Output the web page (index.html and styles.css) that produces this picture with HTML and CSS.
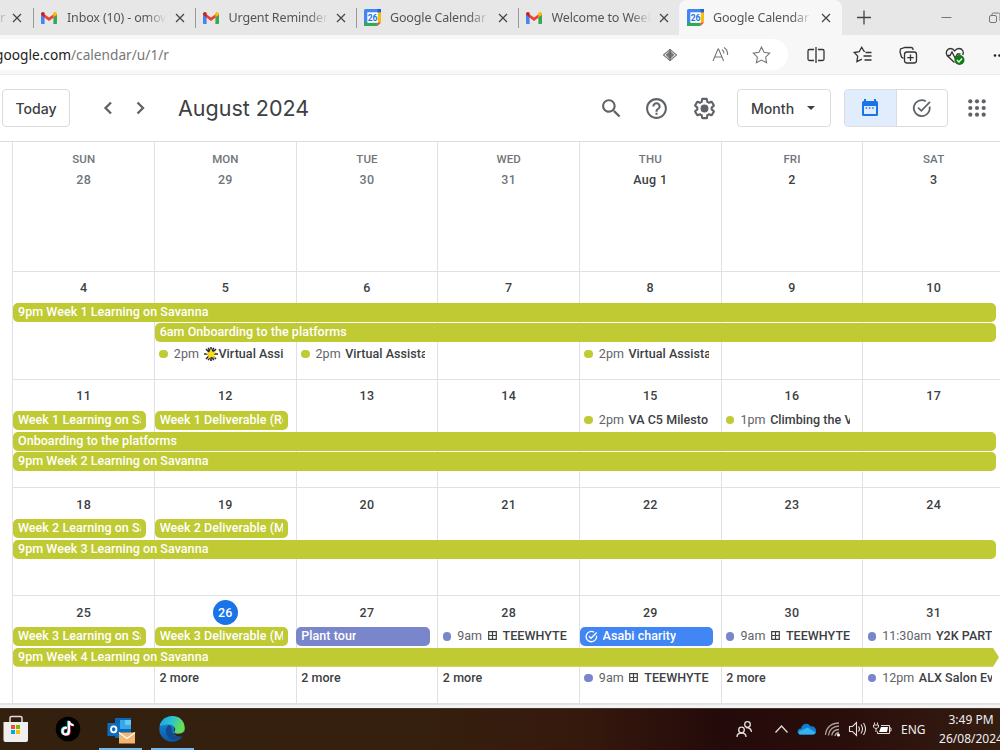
FILE: index.html
```html
<!DOCTYPE html>
<html lang="en">
<head>
<meta charset="utf-8">
<title>Google Calendar - August 2024</title>
<link rel="stylesheet" href="styles.css">
</head>
<body>
<svg class="defs" width="0" height="0">
  <symbol id="gmail" viewBox="0 0 16 12"><path fill="#4285f4" d="M0 2v9c0 .6.4 1 1 1h2.6V5z"/><path fill="#34a853" d="M16 2v9c0 .6-.4 1-1 1h-2.600V5z"/><path fill="#ea4335" d="M1 .4 8 5.600 15 .4l-1 4-6 4.700-6-4.700z"/><path fill="#c5221f" d="M0 2C0 .2 2-.6 3.600.7v4.500L0 2.800z"/><path fill="#fbbc04" d="M16 2c0-1.800-2-2.600-3.600-1.300v4.500L16 2.800z"/></symbol>
  <symbol id="gcal" viewBox="0 0 17 17"><path fill="#4285f4" d="M1.500 0H17v4H4v13H0V1.500Q0 0 1.500 0z"/><path fill="#1967d2" d="M13.500 0H17v3.500h-3.500z"/><path fill="#fbbc04" d="M13.500 3.500H17v10h-3.500z"/><path fill="#34a853" d="M0 13.500h13.500V17H1.500Q0 17 0 15.500z"/><path fill="#ea4335" d="M13.500 13.500H17L13.500 17z"/><path fill="#fff" d="M3.300 3.300h10.400v10.400H3.300z"/><text x="8.500" y="11.500" text-anchor="middle" font-size="8.500" font-weight="700" font-family="Roboto, sans-serif" fill="#1a73e8">26</text></symbol>
  <symbol id="close" viewBox="0 0 10 10"><path d="M1 1l8 8M9 1L1 9" stroke="#444" stroke-width="1.200" fill="none"/></symbol>
  <symbol id="grid" viewBox="0 0 9 9"><path d="M.7.7h7.600v7.600H.7zM4.500.7v7.600M.7 4.500h7.600" stroke="#3c4043" stroke-width="1.200" fill="none"/></symbol>
</svg>

<header class="tabs">
  <div class="tab tab-first"><span class="tab-title">r</span><svg class="x"><use href="#close"/></svg></div>
  <div class="tab"><svg class="fav gm"><use href="#gmail"/></svg><span class="tab-title">Inbox (10) - omow</span><svg class="x"><use href="#close"/></svg></div>
  <div class="tab"><svg class="fav gm"><use href="#gmail"/></svg><span class="tab-title">Urgent Reminder/</span><svg class="x"><use href="#close"/></svg></div>
  <div class="tab"><svg class="fav"><use href="#gcal"/></svg><span class="tab-title">Google Calendar -</span><svg class="x"><use href="#close"/></svg></div>
  <div class="tab"><svg class="fav gm"><use href="#gmail"/></svg><span class="tab-title">Welcome to Week</span><svg class="x"><use href="#close"/></svg></div>
  <div class="tab active"><svg class="fav"><use href="#gcal"/></svg><span class="tab-title">Google Calendar -</span><svg class="x"><use href="#close"/></svg></div>
  <svg class="win-icons" viewBox="0 0 158 35"><path d="M22 10.500v14M15 17.500h14" stroke="#444" stroke-width="1.300"/><path d="M99.500 17.500h10" stroke="#777"/><g fill="none" stroke="#777"><rect x="147.500" y="15.500" width="7" height="7" rx="1.500"/><path d="M150 15v-1q0-1 1.500-1h5q1.500 0 1.500 1.500V21"/></g></svg>
</header>

<div class="toolbar">
  <div class="address">
    <span class="url"><b>google.com</b>/calendar/u/1/r</span>
    <svg class="addr-icons" viewBox="0 0 120 30" fill="none" stroke="#777" stroke-width="1.100">
      <path d="M1.500 15L8 9.500 14.500 15 8 20.500z"/><path d="M4.500 15L8 11.500v7zM11.500 15L8 11.500v7z" fill="#777"/><path d="M8 9v12" stroke="#666"/>
      <path d="M51 21l5-12h.6l5 12M53 17h6.600M60 9.500q2 1.500 2 4M62 7.500q4 2.500 3.500 7.500"/>
      <path d="M99.500 7l2.500 5.300 5.700.8-4.100 4 1 5.700-5.100-2.700-5.100 2.700 1-5.700-4.100-4 5.700-.8z"/>
    </svg>
  </div>
  <svg class="tool-icons" viewBox="0 0 212 39" fill="none" stroke="#333" stroke-width="1.300">
    <path d="M26 14.500h-4.500q-1.500 0-1.500 1.500v8q0 1.500 1.500 1.500H26M30 14.500h4.500q1.500 0 1.500 1.500v8q0 1.500-1.500 1.500H30M28 12v16"/>
    <path d="M77 16.500l-1-.3-2.300-4-2.500 4.500-5 .8 3.500 3.600-.8 5.600 5-2.600M77.500 17.500h6M75.500 21h8M76.500 25h7"/>
    <rect x="116.500" y="17" width="12" height="11" rx="2.500"/><path d="M122.500 19.500v6.500M119.200 22.700h6.500M125 15v-.5q0-2-2-2h-6l-4.500 1.500-.5 3 1.500 5 2 1.500"/>
    <path d="M166.500 27.500l-7.500-7c-2-3 .2-7 3.500-7q2.600 0 4.200 2.300 1.600-2.300 4.300-2.300c3.200 0 5.400 3.200 3.700 6.500M159 20.500h3l2-3.500 3 6 2.500-4h3"/>
    <circle cx="171.500" cy="25" r="5" fill="#107c10" stroke="none"/><path d="M169 25l2 2 3-3.500" stroke="#fff"/>
    <g fill="#222" stroke="none"><circle cx="207" cy="20.500" r="1.300"/><circle cx="211.500" cy="20.500" r="1.300"/></g>
  </svg>
</div>

<nav class="cal-head">
  <button class="btn today">Today</button>
  <svg class="arrows" viewBox="0 0 44 16" fill="none" stroke="#5f6368" stroke-width="2.300"><path d="M9 2.500L3.500 8 9 13.500M35.500 2.500L41 8l-5.500 5.500"/></svg>
  <h1>August 2024</h1>
  <svg class="ic search" viewBox="0 0 24 24"><path d="M15.500 14h-.79l-.28-.27C15.410 12.590 16 11.110 16 9.500 16 5.910 13.090 3 9.500 3S3 5.910 3 9.500 5.910 16 9.500 16c1.610 0 3.090-.59 4.230-1.570l.27.28v.79l5 4.990L20.490 19l-4.990-5zm-6 0C7.010 14 5 11.990 5 9.500S7.010 5 9.500 5 14 7.010 14 9.500 11.990 14 9.500 14z"/></svg>
  <svg class="ic help" viewBox="0 0 24 24"><path d="M11 18h2v-2h-2v2zm1-16C6.480 2 2 6.480 2 12s4.480 10 10 10 10-4.480 10-10S17.520 2 12 2zm0 18c-4.410 0-8-3.590-8-8s3.590-8 8-8 8 3.590 8 8-3.590 8-8 8zm0-14c-2.210 0-4 1.790-4 4h2c0-1.100.9-2 2-2s2 .9 2 2c0 2-3 1.750-3 5h2c0-2.250 3-2.500 3-5 0-2.210-1.790-4-4-4z"/></svg>
  <svg class="ic gear" viewBox="0 0 24 24"><path d="M13.850 22.250h-3.700c-.74 0-1.360-.54-1.450-1.270l-.27-1.890c-.27-.14-.53-.29-.79-.46l-1.800.72c-.7.26-1.470-.03-1.810-.65L2.200 15.530c-.35-.66-.2-1.440.36-1.880l1.530-1.190c-.01-.15-.02-.3-.02-.46 0-.15.01-.31.02-.46l-1.520-1.190c-.59-.45-.74-1.260-.37-1.880l1.850-3.190c.34-.62 1.110-.9 1.790-.63l1.810.73c.26-.17.52-.32.78-.46l.27-1.910c.09-.7.71-1.250 1.440-1.250h3.700c.74 0 1.360.54 1.450 1.270l.27 1.890c.27.14.53.29.79.46l1.800-.72c.71-.26 1.480.03 1.820.65l1.840 3.180c.36.66.2 1.440-.36 1.880l-1.520 1.190c.01.15.02.3.02.46s-.01.31-.02.46l1.520 1.190c.56.45.72 1.230.37 1.860l-1.860 3.220c-.34.62-1.110.9-1.800.63l-1.800-.72c-.26.17-.52.32-.78.46l-.27 1.910c-.1.68-.72 1.220-1.460 1.220zm-3.230-2h2.760l.37-2.550.53-.22c.44-.18.88-.44 1.340-.78l.45-.34 2.380.96 1.380-2.400-2.030-1.580.07-.56c.03-.26.06-.51.06-.78s-.03-.53-.06-.78l-.07-.56 2.030-1.580-1.390-2.400-2.390.96-.45-.35c-.42-.32-.87-.58-1.330-.77l-.52-.22-.37-2.550h-2.760l-.37 2.550-.53.210c-.44.19-.88.44-1.340.79l-.45.33-2.380-.95-1.390 2.390 2.030 1.580-.07.56a7 7 0 0 0-.06.79c0 .26.02.53.06.78l.07.56-2.030 1.580 1.380 2.400 2.390-.96.45.35c.43.33.86.58 1.330.77l.53.22.38 2.550z"/><circle cx="12" cy="12" r="3.800"/></svg>
  <button class="btn month">Month<i class="caret"></i></button>
  <div class="switch">
    <span class="on"><svg width="18" height="20" viewBox="0 0 18 20"><path fill="#1a73e8" d="M3 1h2v2h8V1h2v2h.5Q17 3 17 4.500v12q0 1.500-1.500 1.500h-13Q1 18 1 16.500v-12Q1 3 2.500 3H3z"/><path fill="#e1edfc" d="M3 8h12v8H3z"/><path stroke="#1a73e8" stroke-width="1.500" stroke-dasharray="1.500 1.800" d="M4.600 10h9"/></svg></span>
    <span><svg width="20" height="20" viewBox="0 0 20 20" fill="none" stroke="#5f6368" stroke-width="1.700"><path d="M17.600 8.500a8 8 0 1 1-3.800-5.300M6 9.500l3.300 3.300 8.700-9"/></svg></span>
  </div>
  <svg class="apps" viewBox="0 0 18 18" fill="#5f6368"><circle cx="2.300" cy="2.300" r="2.100"/><circle cx="9" cy="2.300" r="2.100"/><circle cx="15.700" cy="2.300" r="2.100"/><circle cx="2.300" cy="9" r="2.100"/><circle cx="9" cy="9" r="2.100"/><circle cx="15.700" cy="9" r="2.100"/><circle cx="2.300" cy="15.700" r="2.100"/><circle cx="9" cy="15.700" r="2.100"/><circle cx="15.700" cy="15.700" r="2.100"/></svg>
</nav>

<main class="month-grid">
  <section class="week first">
    <div class="day c1 out"><em>SUN</em>28</div><div class="day c2 out"><em>MON</em>29</div><div class="day c3 out"><em>TUE</em>30</div><div class="day c4 out"><em>WED</em>31</div><div class="day c5"><em>THU</em>Aug 1</div><div class="day c6"><em>FRI</em>2</div><div class="day c7"><em>SAT</em>3</div>
  </section>
  <section class="week">
    <div class="day c1">4</div><div class="day c2">5</div><div class="day c3">6</div><div class="day c4">7</div><div class="day c5">8</div><div class="day c6">9</div><div class="day c7">10</div>
    <div class="bar full l1">9pm Week 1 Learning on Savanna</div>
    <div class="bar from2 l2">6am Onboarding to the platforms</div>
    <div class="ev c2 l3"><i class="dot"></i><span><s>2pm</s><svg class="burst" viewBox="0 0 14 14"><path d="M7 0v14M0 7h14M2 2l10 10M12 2L2 12M4.300.7l5.400 12.600M9.700.7L4.300 13.300" stroke="#222c35" stroke-width="1.600"/><path d="M7 1.500l1.500 3.300 3.700-.3-2.200 3 1.500 3.800L7.500 10 4 12l.5-3.800L1.600 6l3.700-.8z" fill="#ffdc16"/></svg>Virtual Assi</span></div>
    <div class="ev c3 l3"><i class="dot"></i><span><s>2pm</s>Virtual Assista</span></div>
    <div class="ev c5 l3"><i class="dot"></i><span><s>2pm</s>Virtual Assista</span></div>
  </section>
  <section class="week">
    <div class="day c1">11</div><div class="day c2">12</div><div class="day c3">13</div><div class="day c4">14</div><div class="day c5">15</div><div class="day c6">16</div><div class="day c7">17</div>
    <div class="chip c1 l1"><span>Week 1 Learning on Sa</span></div>
    <div class="chip c2 l1"><span>Week 1 Deliverable (Re</span></div>
    <div class="ev c5 l1"><i class="dot"></i><span><s>2pm</s>VA C5 Milesto</span></div>
    <div class="ev c6 l1"><i class="dot"></i><span><s>1pm</s>Climbing the V</span></div>
    <div class="bar full l2">Onboarding to the platforms</div>
    <div class="bar full l3">9pm Week 2 Learning on Savanna</div>
  </section>
  <section class="week">
    <div class="day c1">18</div><div class="day c2">19</div><div class="day c3">20</div><div class="day c4">21</div><div class="day c5">22</div><div class="day c6">23</div><div class="day c7">24</div>
    <div class="chip c1 l1"><span>Week 2 Learning on Sa</span></div>
    <div class="chip c2 l1"><span>Week 2 Deliverable (M</span></div>
    <div class="bar full l2">9pm Week 3 Learning on Savanna</div>
  </section>
  <section class="week">
    <div class="day c1">25</div><div class="day c2"><b class="now">26</b></div><div class="day c3">27</div><div class="day c4">28</div><div class="day c5">29</div><div class="day c6">30</div><div class="day c7">31</div>
    <div class="chip c1 l1"><span>Week 3 Learning on Sa</span></div>
    <div class="chip c2 l1"><span>Week 3 Deliverable (M</span></div>
    <div class="chip c3 l1 lav"><span>Plant tour</span></div>
    <div class="ev c4 l1 lavdot"><i class="dot"></i><span><s>9am</s><svg class="gr"><use href="#grid"/></svg>TEEWHYTE</span></div>
    <div class="chip c5 l1 blue"><svg width="13" height="13" viewBox="0 0 20 20" fill="none" stroke="#fff" stroke-width="2"><path d="M17.600 8.500a8 8 0 1 1-3.800-5.300M6 9.500l3.300 3.300 8.700-9"/></svg><span>Asabi charity</span></div>
    <div class="ev c6 l1 lavdot"><i class="dot"></i><span><s>9am</s><svg class="gr"><use href="#grid"/></svg>TEEWHYTE</span></div>
    <div class="ev c7 l1 lavdot"><i class="dot"></i><span><s>11:30am</s>Y2K PART</span></div>
    <div class="bar full l2 next">9pm Week 4 Learning on Savanna</div>
    <div class="more c2 l3">2 more</div><div class="more c3 l3">2 more</div><div class="more c4 l3">2 more</div>
    <div class="ev c5 l3 lavdot"><i class="dot"></i><span><s>9am</s><svg class="gr"><use href="#grid"/></svg>TEEWHYTE</span></div>
    <div class="more c6 l3">2 more</div>
    <div class="ev c7 l3 lavdot"><i class="dot"></i><span><s>12pm</s>ALX Salon Eve</span></div>
  </section>
</main>
<div class="edge"></div>

<footer class="taskbar">
  <svg class="pins" viewBox="0 0 200 42">
    <defs>
      <linearGradient id="e1" x1="0" y1="0" x2="1" y2=".3"><stop offset="0" stop-color="#1b9de2"/><stop offset=".5" stop-color="#2bc3d2"/><stop offset="1" stop-color="#6be04e"/></linearGradient>
      <linearGradient id="e2" x1="0" y1="0" x2="0" y2="1"><stop offset="0" stop-color="#1b8fdc"/><stop offset="1" stop-color="#0c59a4"/></linearGradient>
    </defs>
    <path d="M10 15v-5q0-1.500 1.500-1.500h9q1.500 0 1.500 1.500v5" fill="none" stroke="#ddd" stroke-width="1.500"/><path d="M3.500 14h24.500v18q0 2-2 2H5.500q-2 0-2-2z" fill="#efefef"/><path d="M11 17h4v4h-4z" fill="#f25022"/><path d="M16 17h4v4h-4z" fill="#7fba00"/><path d="M11 22h4v4h-4z" fill="#00a4ef"/><path d="M16 22h4v4h-4z" fill="#ffb900"/>
    <circle cx="68" cy="21" r="12.300" fill="#000"/><g fill="none" stroke-width="2"><path d="M66.300 19.300q-4.500-.5-4.500 3.500 0 3.300 3.200 3.300t3.200-3.500V12.700q.5 3.500 4.500 4" stroke="#25f4ee"/><path d="M67.800 20.300q-4.500-.5-4.500 3.500 0 3.300 3.200 3.300t3.200-3.500V13.500q.5 3.500 4.500 4" stroke="#fe2c55"/><path d="M67.100 19.800q-4.500-.5-4.500 3.500 0 3.300 3.200 3.300t3.200-3.500V13.200q.5 3.500 4.500 4" stroke="#fff"/></g>
    <path d="M115 10h16v20h-16z" fill="#0a66b8"/><path d="M120 12h11v9h-11z" fill="#35a8ea"/><path d="M125 12h6v5h-6z" fill="#62c8f5"/><path d="M107.500 15h12.500v13h-12.500z" fill="#0f6cbd"/><ellipse cx="113.700" cy="21.300" rx="2.700" ry="3" fill="none" stroke="#fff" stroke-width="1.800"/><path d="M119 24.500h16v11h-16z" fill="#f0b771"/><path d="M119 24.500l8 6 8-6" fill="none" stroke="#fff" stroke-width="1.100"/>
    <circle cx="172" cy="21" r="12.700" fill="url(#e2)"/><path d="M159.600 18C162 5 184 4 184.700 20c0 6-8 7-11 4.500 2.500-3 1-7.500-4-8-4.500-.5-8.500 1-10.100 1.500z" fill="url(#e1)"/><path d="M169 17c-6 4-3 15 6 15 4 0 7-2 8-3.500-4 1-9-.5-10.500-4-1.500-3 .5-6-3.500-7.500z" fill="#134a8e"/><path d="M174.500 19c2 3-1 4.500 0 6 3 1.500 7 1 10.500-1.500q-1 3-2.500 5c-5 1-9.500-2-8.500-6z" fill="#35200f"/>
    <path d="M99 40h43v2H99zM151 40h43v2h-43z" fill="#76b9ed"/>
  </svg>
  <svg class="tray" viewBox="0 0 170 42" fill="none" stroke="#e5dedc" stroke-width="1.300">
    <circle cx="21.500" cy="16.500" r="2.800"/><circle cx="15.500" cy="22" r="2.800"/><path d="M11 29q0-4 4.500-4t4.500 4M20 19.500q5 0 5.500 4.500"/>
    <path d="M49.500 24.500l6-6.500 6 6.500"/>
    <path d="M74 26.500c-3.500-.5-3-6 1-6 1-6 8-6 9.500-2 4-1 6 3 5.500 5 0 2-1 3-3 3z" fill="#0f7fd4" stroke="none"/><path d="M73.500 26.500c-2-2 0-4 2-4l6-3 8 5c-.5 1.500-1.500 2-3 2z" fill="#36b2f0" stroke="none"/>
    <path d="M99.500 27C100 19 106 15 113 15M102.500 27.500c.5-6 4.500-9 10.500-9.500M105.800 27.500c.5-3.500 3-5.800 7.200-6M109 28q.5-3 4-3.500" stroke="#aaa09c"/><circle cx="112.500" cy="27" r="1.500" fill="#fff" stroke="none"/>
    <path d="M123.500 18.500h3l4-4v13l-4-4h-3zM132.500 18.500q2 2.500 0 5M135 16.500q3 4.500 0 9M137.500 15q4 6 0 12" stroke-width="1.100"/>
    <path d="M155 17.500h8.500v8h-12v-2M163.500 20h1.500v3h-1.500M148.500 14.500v2M151.500 14.500v2M147.500 17h5v2q-1 1.500-2.500 1.500t-2.500-1.500zM150 20.500V24" stroke-width="1"/><path d="M155 19h7l-1 5h-8z" fill="#fff" stroke="none"/>
  </svg>
  <span class="lang">ENG</span>
  <div class="clock"><span>3:49 PM</span><span>26/08/2024</span></div>
</footer>
</body>
</html>
```
FILE: styles.css
```css
* { box-sizing: border-box; }
body { margin: 0; width: 1000px; height: 750px; overflow: hidden; background: #fff; font-family: Roboto, sans-serif; color: #3c4043; }
.defs { display: block; height: 0; }
svg { flex: none; }

/* browser tabs */
.tabs { display: flex; height: 35px; background: #e7e7e7; font: 12.500px "Noto Sans", sans-serif; letter-spacing: -.15px; color: #555; }
.tab { display: flex; align-items: center; width: 161.500px; padding-left: 8px; position: relative; }
.tab::before { content: ""; position: absolute; left: 0; top: 8px; width: 1px; height: 20px; background: #999; }
.tab-first { width: 33px; padding-left: 0; }
.tab-first::before, .active::before { display: none; }
.tab-first .tab-title { width: 10px; margin: 0; color: #bbb; }
.fav { width: 17px; height: 17px; }
.gm { height: 12px; width: 16px; margin-right: 1px; }
.tab-title { flex: none; width: 99px; margin: 0 5px 0 9px; white-space: nowrap; overflow: hidden; mask-image: linear-gradient(90deg, #000 80%, transparent 100%); }
.x { width: 10px; height: 10px; margin-left: 3.500px; }
.tab-first .x { margin-left: 2px; }
.active { background: #f7f7f7; border-radius: 8px 8px 0 0; width: 163px; padding-left: 8px; }
.win-icons { width: 158px; height: 35px; }

/* address row */
.toolbar { display: flex; align-items: center; height: 40px; background: #f7f7f7; border-bottom: 1px solid #ececec; }
.address { display: flex; align-items: center; justify-content: space-between; width: 788px; height: 31px; background: #fff; border-radius: 0 16px 16px 0; padding-right: 6px; }
.url { font: 13.700px "Noto Sans", sans-serif; color: #777; margin-left: -5px; }
.url b { font-weight: 400; color: #222; }
.addr-icons { width: 120px; height: 30px; }
.tool-icons { width: 212px; height: 39px; }

/* calendar header */
.cal-head { display: flex; align-items: center; height: 66px; padding-left: 2px; }
.cal-head > * { flex: none; }
.btn { height: 38px; border: 1px solid #dadce0; border-radius: 4px; background: #fff; color: #3c4043; font: 500 14.100px Inter, sans-serif; padding: 0; }
.today { width: 68px; }
.arrows { width: 44px; height: 16px; margin-left: 32px; }
h1 { margin: 0; font: 400 21.500px Inter, sans-serif; width: 453px; padding-left: 32px; white-space: nowrap; }
.ic { width: 25px; height: 25px; fill: #5f6368; }
.search { margin-right: 19.500px; }
.help { margin-right: 23px; }
.gear { margin-right: 20.500px; }
.month { width: 94px; display: flex; align-items: center; padding-left: 13px; }
.caret { border: 4.500px solid transparent; border-top-color: #3c4043; border-bottom: 0; margin-left: 13px; }
.switch { display: flex; width: 104px; height: 38px; margin-left: 13px; border: 1px solid #dadce0; border-radius: 4px; overflow: hidden; }
.switch span { width: 51px; display: flex; align-items: center; justify-content: center; }
.switch .on { width: 52px; background: #e1edfc; border-right: 1px solid #dadce0; }
.apps { width: 18px; height: 18px; margin-left: 20px; }

/* month grid: day cells sit behind event lanes on the same tracks */
.month-grid { display: grid; grid-template-rows: 130px repeat(4, 108.100px); height: 562.400px; padding-left: 12.400px; border-top: 1px solid #dadce0; }
.week { display: grid; grid-template-columns: repeat(7, 141.660px); grid-template-rows: 30.600px repeat(3, 20.850px) 1fr; }
.day { grid-row: 1 / -1; border-left: 1px solid #dfe1e4; border-bottom: 1px solid #dfe1e4; text-align: center; font-weight: 500; font-size: 12.500px; line-height: 15px; padding-top: 8.400px; letter-spacing: .35px; }
.first .day { padding-top: 10px; }
.day em { display: block; font-style: normal; font-size: 11.500px; color: #70757a; margin-bottom: 5px; letter-spacing: .1px; }
.out { color: #70757a; }
.now { display: block; width: 25px; height: 25px; line-height: 25px; margin: -5px auto; border-radius: 50%; background: #1a73e8; color: #fff; font-weight: 500; }
.c1 { grid-column: 1; } .c2 { grid-column: 2; } .c3 { grid-column: 3; } .c4 { grid-column: 4; } .c5 { grid-column: 5; } .c6 { grid-column: 6; } .c7 { grid-column: 7; }
.l1 { grid-row: 2; } .l2 { grid-row: 3; } .l3 { grid-row: 4; }
.bar, .chip, .ev, .more { height: 19px; line-height: 18.500px; font-weight: 500; font-size: 12.500px; letter-spacing: .05px; white-space: nowrap; }
.bar, .chip { background: #c0ca33; color: #fff; border-radius: 5px; padding-left: 5px; margin-left: .6px; }
.full { grid-column: 1 / 8; margin-right: 8px; }
.from2 { grid-column: 2 / 8; margin-right: 8px; }
.next { margin-right: 5px; border-radius: 5px 0 0 5px; clip-path: polygon(0 0, 980px 0, 100% 50%, 980px 100%, 0 100%); }
.chip { width: 133.500px; padding-right: 5px; display: flex; align-items: center; gap: 5px; }
.chip span { overflow: hidden; }
.lav { background: #7986cb; }
.blue { background: #4285f4; }
.ev { display: flex; align-items: center; width: 129.500px; padding-left: 5.300px; color: #3c4043; }
.ev span { overflow: hidden; margin-left: 6px; }
.ev s { text-decoration: none; font-weight: 400; color: #5f6368; margin-right: 4.500px; }
.dot { flex: none; width: 8.500px; height: 8.500px; border-radius: 50%; background: #c0ca33; }
.lavdot .dot { background: #7986cb; }
.burst { width: 14px; height: 14px; vertical-align: -3px; margin-right: 1px; }
.gr { width: 9px; height: 9px; margin: 0 6px 0 1px; }
.more { padding-left: 5.500px; }
.edge { height: 4.600px; background: #f3f3f3; border-top: 2px solid #e4e4e4; }

/* taskbar */
.taskbar { display: flex; height: 42px; background: linear-gradient(90deg, #34200f 0%, #35200f 40%, #36190d 58%, #240a0a 72%, #2a0e0b 85%, #341d11 100%); color: #eee; font: 12px "Noto Sans", sans-serif; border-top: 1px solid #45372c; }
.taskbar > * { flex: none; }
.pins { width: 200px; height: 42px; margin-right: 526px; margin-top: -1px; }
.tray { width: 170px; height: 42px; margin-top: -1px; }
.lang { line-height: 41px; width: 37px; margin-left: 5px; }
.clock { display: flex; flex-direction: column; align-items: center; width: 66px; white-space: nowrap; line-height: 19px; padding-top: 1px; }
```
